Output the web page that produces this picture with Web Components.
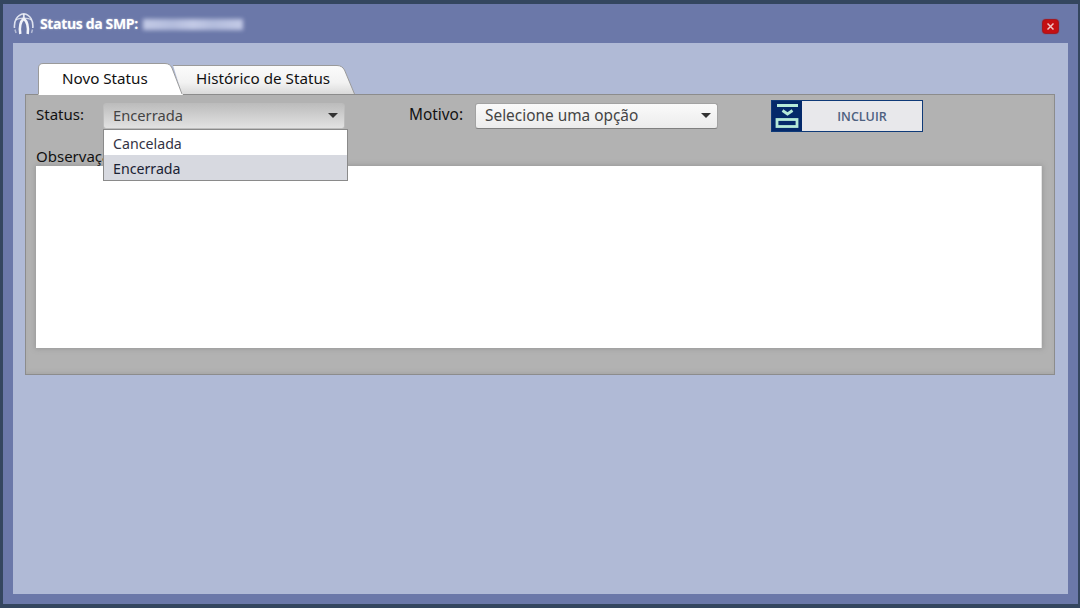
<!DOCTYPE html>
<html lang="pt">
<head>
<meta charset="utf-8">
<title>Status da SMP</title>
<style>
html, body { margin: 0; height: 100%; }
body { background: #34465f; font-family: "Noto Sans", "Open Sans", "Liberation Sans", sans-serif; overflow: hidden; }
</style>
</head>
<body>
<status-window>
  <status-tabs></status-tabs>
  <status-form></status-form>
</status-window>

<script>
class StatusWindow extends HTMLElement {
    constructor() {
        super();
        this.attachShadow({ mode: 'open' });
        this.shadowRoot.innerHTML = `
            <style>
:host {
  display: flex;
  flex-direction: column;
  box-sizing: border-box;
  width: 1075px;
  height: 600px;
  margin: 4px 0 0 3px;
  background: #6b78a9;
}
.titlebar {
  height: 39px;
  flex: none;
  display: flex;
  align-items: center;
  padding: 0 20px 0 10px;
  color: #fff;
}
.logo { width: 21px; height: 22px; margin-right: 6px; flex: none; }
.title {
  font: 700 14px "Open Sans", sans-serif;
  letter-spacing: -0.35px;
  text-shadow: 0 0 2px rgba(255,255,255,.55);
}
.blur {
  width: 100px;
  height: 11px;
  margin: 2px 0 0 5px;
  background: linear-gradient(90deg, #c3cae6, #b3bcdc 30%, #c3cae6 50%, #b3bcdc 70%, #c3cae6);
  filter: blur(2px);
}
.close {
  margin-left: auto;
  margin-top: 6px;
  width: 15px;
  height: 13px;
  border-radius: 3px;
  background: #c40f12;
  box-shadow: 0 0 1px 1px #a81014;
  display: flex;
  align-items: center;
  justify-content: center;
}
.close svg { width: 7px; height: 7px; }
.content {
  flex: 1;
  margin: 0 10px 10px;
  padding: 19px 13px 0 12px;
  background: #b0bad6;
}
            </style>
            <header class="titlebar">
              <svg class="logo" viewBox="0 0 21 22" fill="none" stroke="#f1f3fa">
                <path d="M7.300 21C6.300 15 6.400 9.500 10.800 5.500" stroke-width="2.500"/>
                <path d="M14.700 21C15.500 15 15.200 9.500 10.800 5.500" stroke-width="2.500"/>
                <path d="M1.500 15C.8 8 4 1.800 10.800 .8C17.500 1.800 20.500 8 19.800 15" stroke-width="1.600" opacity=".85"/>
                <path d="M10.800 1V5.500" stroke-width="1.800" opacity=".9"/>
                <path d="M3 7C6 4.500 15.500 4.500 18.500 7" stroke-width="1.200" opacity=".75"/>
                <path d="M3 20L2 16.500M18.500 20L19.500 16.500" stroke-width="1.500" opacity=".55"/>
              </svg>
              <span class="title">Status da SMP:</span>
              <div class="blur"></div>
              <div class="close">
                <svg viewBox="0 0 7 7" stroke="#f3c3c3" stroke-width="1.500"><path d="M.5.5l6 6M6.500.5l-6 6"/></svg>
              </div>
            </header>
            <div class="content"><slot></slot></div>
        `;
    }
}

class StatusTabs extends HTMLElement {
    constructor() {
        super();
        this.attachShadow({ mode: 'open' });
        this.shadowRoot.innerHTML = `
            <style>
:host {
  display: flex;
  height: 32px;
  margin-left: 13px;
  font: 15.200px "Noto Sans", "Open Sans", sans-serif;
  color: #111;
}
.tab { position: relative; height: 100%; display: flex; align-items: center; }
.tab svg { position: absolute; left: 0; top: 0; }
.tab span { position: relative; white-space: nowrap; }
.active { width: 135px; z-index: 1; padding-left: 24px; box-sizing: border-box; }
.other { width: 183px; margin-left: -1px; padding: 0 0 0 24px; box-sizing: border-box; }
            </style>
            <div class="tab active">
              <svg width="145" height="33" viewBox="0 0 145 33">
                <path d="M.5 33V6Q.5 1.500 5 1.500H127Q132 1.500 134 6L145 33Z" fill="#fff"/>
                <path d="M.5 32V6Q.5 1.500 5 1.500H127Q132 1.500 134 6L144 32" fill="none" stroke="#9a9a9a"/>
              </svg>
              <span>Novo Status</span>
            </div>
            <div class="tab other">
              <svg width="184" height="32" viewBox="0 0 184 32">
                <defs>
                  <linearGradient id="g" x1="0" y1="0" x2="0" y2="1">
                    <stop offset="0" stop-color="#fbfbfb"/>
                    <stop offset=".6" stop-color="#f2f2f2"/>
                    <stop offset="1" stop-color="#dadada"/>
                  </linearGradient>
                </defs>
                <path d="M1 3.500H165Q170 3.500 172.500 8L182.500 32H10Z" fill="url(#g)"/>
                <path d="M1 3.500H165Q170 3.500 172.500 8L182.500 32" fill="none" stroke="#9a9a9a"/>
              </svg>
              <span>Histórico de Status</span>
            </div>
        `;
    }
}

class FieldSelect extends HTMLElement {
    constructor() {
        super();
        this.attachShadow({ mode: 'open' });
    }

    connectedCallback() {
        const open = this.hasAttribute('open');
        const options = (this.getAttribute('options') || '').split('|').filter(Boolean);
        const value = this.getAttribute('value');
        this.shadowRoot.innerHTML = `
            <style>
:host {
  display: block;
  position: relative;
  width: 243px;
  height: 26px;
  font: 15.400px "Noto Sans", "Open Sans", sans-serif;
}
:host([open]) { width: 242px; font-size: 14.700px; }
.box {
  box-sizing: border-box;
  height: 100%;
  display: flex;
  align-items: center;
  padding: 0 6px 2px 9px;
  border: 1px solid #a2a2a2;
  border-bottom-color: #808080;
  border-radius: 3px;
  color: #444;
  background: linear-gradient(#fafafa, #ececec);
}
:host([open]) .box { background: linear-gradient(#bdbdbd, #e2e2e2); border-color: #bcbcbc; }
.arrow { margin-left: auto; width: 0; height: 0; border: 5px solid transparent; border-top: 5px solid #333; border-bottom: 0; }
.list {
  position: absolute;
  left: 0;
  top: 26px;
  width: 245px;
  box-sizing: border-box;
  background: #fff;
  border: 1px solid #8a8a8a;
  color: #334;
  z-index: 2;
  font-size: 14.200px;
}
.list div { height: 25px; line-height: 27px; padding: 0 9px; box-sizing: border-box; }
.list .sel { background: #d7d9e0; color: #1a2233; }
            </style>
            <div class="box"><span>${value}</span><i class="arrow"></i></div>
            ${open ? `<div class="list">${options.map(o => `<div class="${o === value ? 'sel' : ''}">${o}</div>`).join('')}</div>` : ''}
        `;
    }
}

class IncludeButton extends HTMLElement {
    constructor() {
        super();
        this.attachShadow({ mode: 'open' });
        this.shadowRoot.innerHTML = `
            <style>
:host {
  display: flex;
  box-sizing: border-box;
  width: 152px;
  height: 32px;
  border: 1px solid #0f3a78;
  background: #e8e8eb;
  font: 600 12.500px "Open Sans", sans-serif;
  color: #4d6080;
}
.icon { width: 30px; flex: none; background: #04296a; }
.icon svg { display: block; }
.label { flex: 1; display: flex; align-items: center; justify-content: center; }
            </style>
            <div class="icon">
              <svg width="30" height="30" viewBox="0 0 30 30" fill="none" stroke="#b6ead9">
                <path d="M5 4.500H26" stroke-width="3"/>
                <path d="M10.500 9.500L15.500 13L20.500 9.500" stroke-width="2.800"/>
                <rect x="5" y="18.500" width="20" height="7" stroke-width="2.800"/>
              </svg>
            </div>
            <div class="label">INCLUIR</div>
        `;
    }
}

class StatusForm extends HTMLElement {
    constructor() {
        super();
        this.attachShadow({ mode: 'open' });
        this.shadowRoot.innerHTML = `
            <style>
:host {
  display: block;
  box-sizing: border-box;
  height: 281px;
  background: #b2b2b2;
  border: 1px solid #8c8c8c;
  box-shadow: inset 0 -3px 4px -2px #a3a3a3;
  font: 15px "Noto Sans", "Open Sans", sans-serif;
  color: #111;
  padding: 5px 12px 0 10px;
}
.row { display: flex; align-items: flex-start; height: 32px; }
.row label { line-height: 29px; }
.status-label { width: 67px; }
field-select { margin-top: 3px; }
.motivo { margin-left: 64px; width: 66px; font-size: 15.400px; }
include-button { margin-left: 53px; }
.obs { height: 35px; padding-top: 14px; line-height: 20px; box-sizing: border-box; white-space: nowrap; }
.area {
  height: 182px;
  background: #fff;
  border-right: 1px solid #e4e4e4;
  box-shadow: 0 0 5px 1px #999;
  margin-top: -1px;
}
            </style>
            <div class="row">
              <label class="status-label">Status:</label>
              <field-select open value="Encerrada" options="Cancelada|Encerrada"></field-select>
              <label class="motivo">Motivo:</label>
              <field-select value="Selecione uma opção"></field-select>
              <include-button></include-button>
            </div>
            <div class="obs">Observação:</div>
            <div class="area"></div>
        `;
    }
}

customElements.define('field-select', FieldSelect);
customElements.define('include-button', IncludeButton);
customElements.define('status-tabs', StatusTabs);
customElements.define('status-form', StatusForm);
customElements.define('status-window', StatusWindow);
</script>
</body>
</html>
